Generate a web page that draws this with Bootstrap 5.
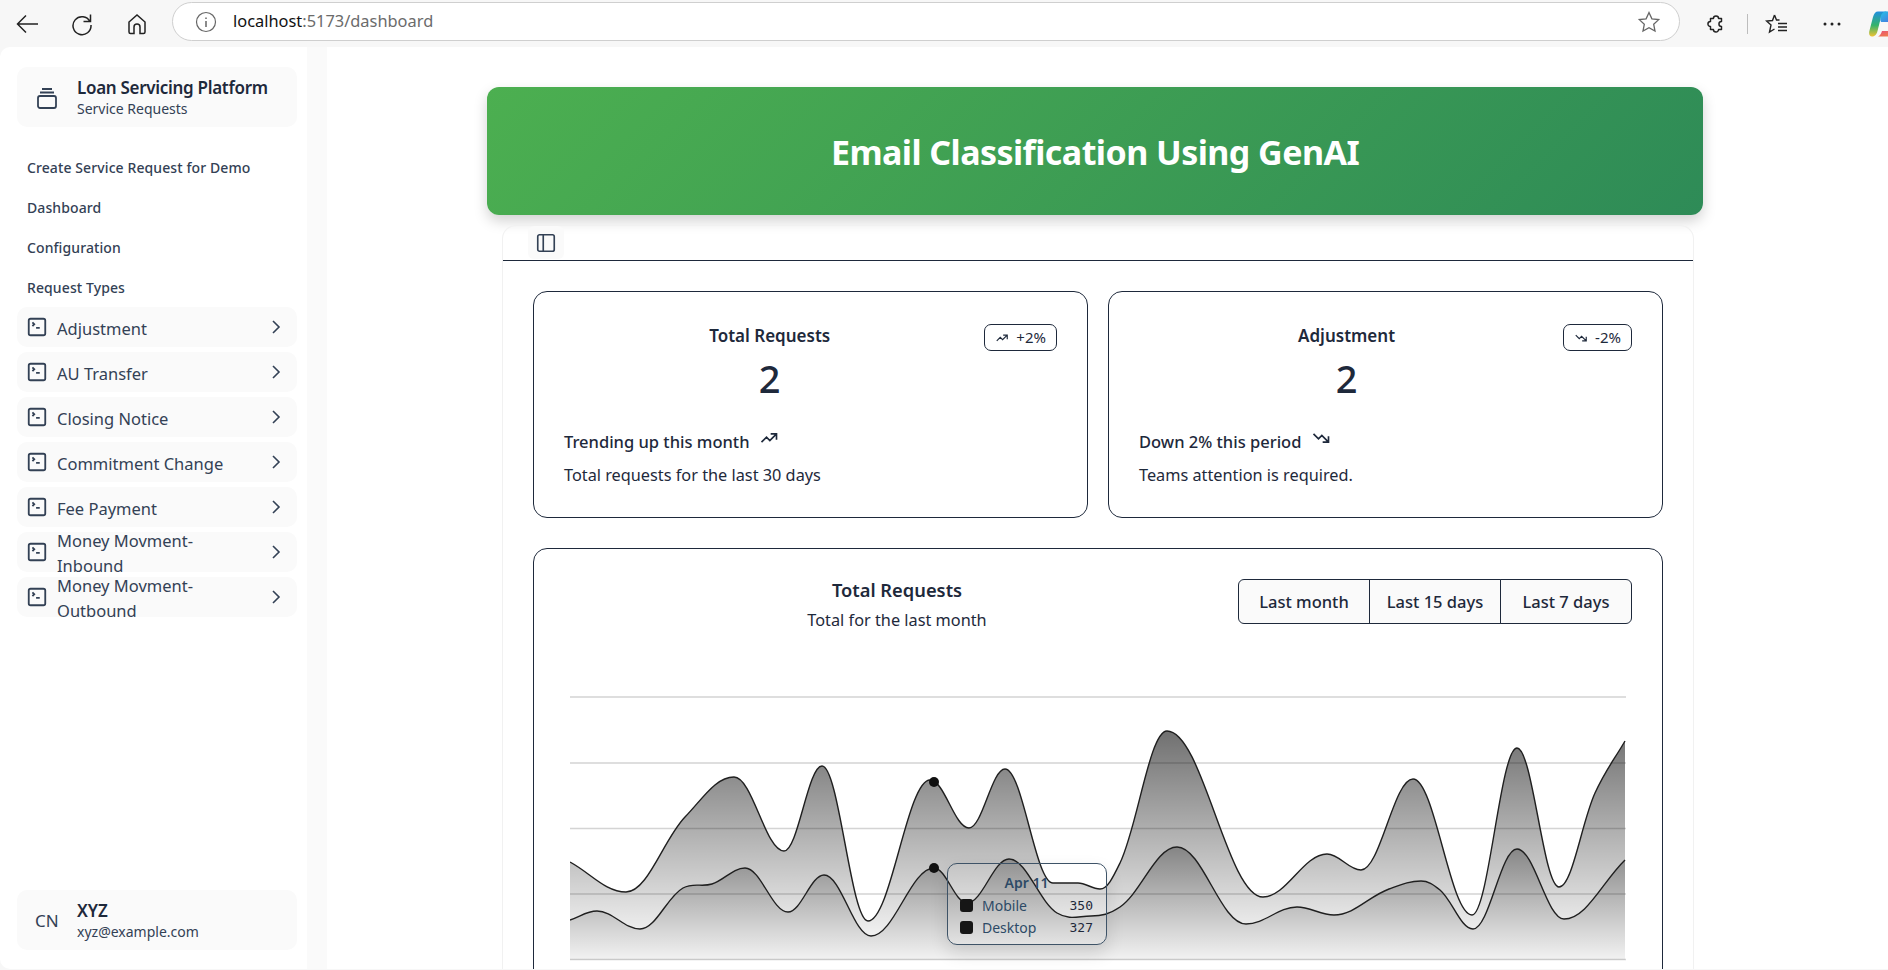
<!doctype html>
<html lang="en">
<head>
<meta charset="utf-8">
<title>Dashboard</title>
<link href="https://cdn.jsdelivr.net/npm/bootstrap@5.3.0/dist/css/bootstrap.min.css" rel="stylesheet">
<style>
html,body{height:970px;overflow:hidden;background:#f7f7f7}
body{font-family:"Noto Sans",sans-serif;color:#1e293b}
.br-bar{height:47px;padding-left:15px;gap:31px}
.br-bar svg{display:block}
.br-ic{width:24px;height:24px;flex:none}
.br-addr{height:39px;margin:-5px 0 0 -8px;flex:1;background:#fff;border:1px solid #cfcfcf;border-radius:20px;padding:1px 18px 0 22px;font-size:16.4px;color:#6b6b6b}
.br-addr b{font-weight:400;color:#111}
.br-right{width:208px;flex:none;margin-left:-31px;padding-left:25px;overflow:hidden;height:47px}
.br-div{width:1px;height:20px;background:#bdbdbd;margin:0 17px 0 20px}
.br-dots{margin:0 26px 0 32px}
.app{height:922px;background:#fff;border-radius:10px 0 0 10px;overflow:hidden}
.side{width:307px;flex:none;padding:20px 10px 19px 17px}
.gutter{width:20px;flex:none;background:#fafafa}
.tile{background:#fafafa;border-radius:10px}
.s-head{height:60px;padding:2px 0 0 18px;gap:18px}
.s-head .t1{font-size:17px;font-weight:600;line-height:22px;letter-spacing:-.3px}
.s-head .t2{font-size:14px;line-height:20px;color:#334155}
.s-link{height:40px;font-size:14px;font-weight:500;padding-left:10px;color:#334155;letter-spacing:.1px}
.s-link.first{margin-top:20px}
.s-item{height:40px;margin-bottom:5px;overflow:hidden;padding:0 9px;font-size:16.5px;line-height:25px;color:#334155}
.s-item .lbl{width:172px;margin-left:9px;flex:none;padding-top:2px}
.s-item .chev{margin-left:auto}
.s-item svg{flex:none}
.s-foot{height:60px;margin-top:auto;padding:2px 0 0 18px;gap:15px}
.s-foot .cn{width:27px;font-size:17px;color:#334155}
.s-foot .t1{font-size:17px;font-weight:600;line-height:22px}
.s-foot .t2{font-size:14px;line-height:20px;color:#334155}
.content{flex:1;padding-top:40px;padding-left:160px;min-width:0}
.hero{width:1216px;height:128px;padding-top:3px;border-radius:12px;background:linear-gradient(135deg,#4caf50,#2e8b57);box-shadow:0 6px 14px rgba(0,0,0,.18);color:#fff;font-size:34px;letter-spacing:-.55px;font-weight:700}
.panel{width:1192px;margin:10px 0 0 15px;border:1px solid #f1f1f1;border-radius:14px 14px 0 0;border-bottom:0}
.p-top{height:35px;border-bottom:1px solid #1e293b;padding-left:25px}
.p-toggle{width:36px;height:33px;background:#fafafa;border-radius:6px}
.p-body{padding:30px 30px 0 30px}
.kpi{width:555px;height:227px;border:1px solid #1e293b;border-radius:14px;background:#fff;padding:30px}
.kpi-head{padding-right:9px}
.kpi-title{font-size:17px;font-weight:600;line-height:24px;margin-top:2px}
.kpi-num{font-size:38px;font-weight:500;line-height:50px;margin-top:5px}
.kpi-badge{height:27px;border:1px solid #1e293b;border-radius:7px;padding:0 10px;font-size:15px;font-weight:400;gap:7px;color:#1e293b;flex:none;margin-top:2px}
.kpi-l1{font-size:16.5px;font-weight:500;line-height:24px;margin-top:25px;gap:10px}
.kpi-l1 svg{margin-bottom:7px}
.kpi-l2{font-size:16.3px;line-height:24px;margin-top:8px;color:#1e293b}
.chartcard{margin-top:30px;height:600px;border:1px solid #1e293b;border-radius:14px;padding:30px 30px 0 30px}
.ch-title{font-size:18.3px;font-weight:600;line-height:24px;margin-top:-1px}
.ch-sub{font-size:16.3px;line-height:24px;margin-top:6px}
.ch-head{height:75px}
.ch-text{padding-right:8px}
.rng .btn{width:132px;height:45px;padding:1px 0 0;background:#fafafa;border-color:#1e293b;color:#1e293b;font-size:16.5px;font-weight:500}
.plot{margin:36px 0 0 6px;width:1056px;height:290px}
.plot svg{display:block}
.tip{position:absolute;left:377px;top:173px;width:160px;height:82px;border:1px solid #3e5367;border-radius:10px;box-shadow:0 8px 18px rgba(0,0,0,.12);padding:7px 13px 7px 12px;font-size:14px;line-height:23px;color:#2d4a66}
.tip .d{font-weight:600;text-align:center}
.tip .rowline{height:22.500px}
.tip .sw{width:13px;height:13px;background:#161616;border-radius:3px;margin-right:9px}
.tip .v{margin-left:auto;font-family:"DejaVu Sans Mono",monospace;font-size:13px;color:#1e293b}
</style>
</head>
<body>
<div class="br-bar d-flex align-items-center">
  <svg class="br-ic" viewBox="0 0 24 24" fill="none" stroke="#222" stroke-width="1.5"><path d="M23 12H2.500M11 3.500 2.500 12l8.500 8.500"/></svg>
  <svg class="br-ic" viewBox="0 0 24 24" fill="none" stroke="#222" stroke-width="1.500"><path d="M20 9.500A9 9 0 1 0 21 13M20.500 2.500v7h-7"/></svg>
  <svg class="br-ic" viewBox="0 0 24 24" fill="none" stroke="#222" stroke-width="1.500"><path d="M4 20V10l8-7 8 7v10a1.500 1.500 0 0 1-1.500 1.500H15V15a3 3 0 0 0-6 0v6.500H5.500A1.500 1.500 0 0 1 4 20z"/></svg>
  <div class="br-addr d-flex align-items-center">
    <svg width="22" height="22" viewBox="0 0 22 22" fill="none" stroke="#666" stroke-width="1.200" class="me-3"><circle cx="11" cy="11" r="9.500"/><path d="M11 10v6M11 6.500v1.500" stroke-width="1.500"/></svg>
    <span><b>localhost</b>:5173/dashboard</span>
    <svg class="ms-auto" width="24" height="24" viewBox="0 0 24 24" fill="none" stroke="#666" stroke-width="1.300"><path d="M12 2.500l2.900 6.300 6.800.8-5 4.700 1.300 6.800-6-3.400-6 3.400 1.300-6.800-5-4.700 6.800-.8z"/></svg>
  </div>
  <div class="br-right d-flex align-items-center">
    <svg width="22" height="22" viewBox="0 0 24 24" fill="none" stroke="#222" stroke-width="1.600" stroke-linejoin="round" class="flex-shrink-0"><path d="M6 6h3.200a2.800 2.800 0 0 1 5.600 0H18v3.200a2.800 2.800 0 0 0 0 5.600V18h-3.200a2.800 2.800 0 0 1-5.600 0H6v-3.200a2.800 2.800 0 0 1 0-5.600z"/></svg>
    <div class="br-div flex-shrink-0"></div>
    <svg width="24" height="24" viewBox="0 0 24 24" fill="none" stroke="#222" stroke-width="1.400" class="flex-shrink-0"><path d="M9.500 3 7.500 8.500 1.500 9l4.500 4-1.500 7 5-3M9.500 3l2 5h3M13 11.500h9M13 15h9M13 18.500h9"/></svg>
    <svg width="22" height="6" viewBox="0 0 22 6" fill="#222" class="br-dots flex-shrink-0"><circle cx="4" cy="3" r="1.500"/><circle cx="11" cy="3" r="1.500"/><circle cx="18" cy="3" r="1.500"/></svg>
    <svg width="26" height="26" viewBox="0 0 26 26" class="flex-shrink-0">
      <defs>
        <linearGradient id="cp1" x1="0" y1="0" x2="0" y2="1"><stop offset="0" stop-color="#1f8fe0"/><stop offset=".55" stop-color="#35b36a"/><stop offset="1" stop-color="#f0c232"/></linearGradient>
        <linearGradient id="cp2" x1="0" y1="0" x2="1" y2="1"><stop offset="0" stop-color="#22c3e6"/><stop offset="1" stop-color="#4f6be0"/></linearGradient>
        <linearGradient id="cp3" x1="0" y1="0" x2="1" y2="1"><stop offset="0" stop-color="#e8507a"/><stop offset="1" stop-color="#f38a3c"/></linearGradient>
      </defs>
      <path d="M9 .5H19C14.500 1 12.500 4 11.500 8L8.500 20C7.500 24 5.500 25.500 3 25.500 .5 25.500-.5 23 .5 19.500L4 6C5 2.500 6.500.5 9 .5z" fill="url(#cp1)"/>
      <path d="M11 .5H26V11H13.500C12.500 11 11.500 11.500 11.300 8.500 11.500 4 13 1.500 16 .5z" fill="url(#cp2)"/>
      <path d="M9 25.500H26V20H13C12 23 11 24.500 9 25.500z" fill="url(#cp3)"/>
    </svg>
  </div>
</div>

<div class="app d-flex">
  <aside class="side d-flex flex-column">
    <div class="tile s-head d-flex align-items-center">
      <svg width="24" height="24" viewBox="0 0 24 24" fill="none" stroke="#334155" stroke-width="1.800"><path d="M7 3h10M5 6.500h14"/><rect x="3" y="10" width="18" height="12" rx="2"/></svg>
      <div><div class="t1">Loan Servicing Platform</div><div class="t2">Service Requests</div></div>
    </div>
    <div class="s-link first d-flex align-items-center">Create Service Request for Demo</div>
    <div class="s-link d-flex align-items-center">Dashboard</div>
    <div class="s-link d-flex align-items-center">Configuration</div>
    <div class="s-link d-flex align-items-center">Request Types</div>
    <div id="items"></div>
    <div class="tile s-foot d-flex align-items-center">
      <div class="cn">CN</div>
      <div><div class="t1">XYZ</div><div class="t2">xyz@example.com</div></div>
    </div>
  </aside>
  <div class="gutter"></div>
  <main class="content">
    <div class="hero d-flex align-items-center justify-content-center">Email Classification Using GenAI</div>
    <div class="panel">
      <div class="p-top"><div class="p-toggle d-flex align-items-center justify-content-center">
        <svg width="22" height="22" viewBox="0 0 24 24" fill="none" stroke="#334155" stroke-width="1.800"><rect x="3" y="3" width="18" height="18" rx="2"/><path d="M9 3v18"/></svg>
      </div></div>
      <div class="p-body">
        <div class="d-flex justify-content-between">
          <div class="card kpi">
            <div class="d-flex">
              <div class="flex-grow-1 text-center kpi-head"><div class="kpi-title">Total Requests</div><div class="kpi-num">2</div></div>
              <span class="badge kpi-badge d-inline-flex align-items-center">
                <svg width="14" height="14" viewBox="0 0 24 24" fill="none" stroke="#1e293b" stroke-width="2"><path d="M3 17l6-6 4 4 8-8M14 7h7v7"/></svg>+2%</span>
            </div>
            <div class="kpi-l1 d-flex align-items-center">Trending up this month <svg width="20" height="20" viewBox="0 0 24 24" fill="none" stroke="#1e293b" stroke-width="2"><path d="M3 17l6-6 4 4 8-8M14 7h7v7"/></svg></div>
            <div class="kpi-l2">Total requests for the last 30 days</div>
          </div>
          <div class="card kpi">
            <div class="d-flex">
              <div class="flex-grow-1 text-center kpi-head"><div class="kpi-title">Adjustment</div><div class="kpi-num">2</div></div>
              <span class="badge kpi-badge d-inline-flex align-items-center">
                <svg width="14" height="14" viewBox="0 0 24 24" fill="none" stroke="#1e293b" stroke-width="2"><path d="M3 7l6 6 4-4 8 8M21 10v7h-7"/></svg>-2%</span>
            </div>
            <div class="kpi-l1 d-flex align-items-center">Down 2% this period <svg width="20" height="20" viewBox="0 0 24 24" fill="none" stroke="#1e293b" stroke-width="2"><path d="M3 7l6 6 4-4 8 8M21 10v7h-7"/></svg></div>
            <div class="kpi-l2">Teams attention is required.</div>
          </div>
        </div>
        <div class="card chartcard">
          <div class="ch-head d-flex">
            <div class="flex-grow-1 text-center ch-text"><div class="ch-title">Total Requests</div><div class="ch-sub">Total for the last month</div></div>
            <div class="btn-group rng align-self-start" role="group">
              <button type="button" class="btn">Last month</button>
              <button type="button" class="btn">Last 15 days</button>
              <button type="button" class="btn">Last 7 days</button>
            </div>
          </div>
          <div class="plot position-relative">
            <svg id="chart" width="1056" height="290" viewBox="570 690 1056 290">
              <defs>
                <linearGradient id="gu" gradientUnits="userSpaceOnUse" x1="0" y1="731" x2="0" y2="945"><stop offset="0" stop-color="#000" stop-opacity=".56"/><stop offset="1" stop-color="#000" stop-opacity=".03"/></linearGradient>
                <linearGradient id="gl" gradientUnits="userSpaceOnUse" x1="0" y1="847" x2="0" y2="960"><stop offset="0" stop-color="#000" stop-opacity=".48"/><stop offset="1" stop-color="#000" stop-opacity=".05"/></linearGradient>
              </defs>
              <g stroke="#d4d4d4" stroke-width="1.500"><path d="M570 697H1626M570 763H1626M570 828.500H1626M570 894H1626M570 959.500H1626"/></g>
              <path id="au" fill="url(#gu)"/>
              <path id="al" fill="url(#gl)"/>
              <path id="lu" fill="none" stroke="#1f1f1f" stroke-width="1.400"/>
              <path id="ll" fill="none" stroke="#1f1f1f" stroke-width="1.400"/>
              <circle cx="934" cy="782" r="5" fill="#111"/>
              <circle cx="934" cy="868" r="5" fill="#111"/>
            </svg>
            <div class="tip">
              <div class="d">Apr 11</div>
              <div class="d-flex align-items-center rowline"><span class="sw"></span>Mobile<span class="v">350</span></div>
              <div class="d-flex align-items-center rowline"><span class="sw"></span>Desktop<span class="v">327</span></div>
            </div>
          </div>
        </div>
      </div>
    </div>
  </main>
</div>

<script>
(function(){
  var names=["Adjustment","AU Transfer","Closing Notice","Commitment Change","Fee Payment","Money Movment-Inbound","Money Movment-Outbound"];
  var html="";
  names.forEach(function(n){
    html+='<div class="tile s-item d-flex align-items-center"><svg width="22" height="22" viewBox="0 0 24 24" fill="none" stroke="#334155" stroke-width="2"><path d="m7 11 2-2-2-2M11 13h4"/><rect x="3" y="3" width="18" height="18" rx="2"/></svg><span class="lbl">'+n+'</span><svg class="chev" width="24" height="24" viewBox="0 0 24 24" fill="none" stroke="#334155" stroke-width="1.600"><path d="m9 18 6-6-6-6"/></svg></div>';
  });
  document.getElementById("items").innerHTML=html;

  var up=[[570,862],[626,892],[685,817],[734,777],[784,851],[822,766],[868,921],[930,780],[969,828],[1005,769],[1053,883],[1078,883],[1100,889],[1120,863],[1167,731],[1263,897],[1327,854],[1361,870],[1413,779],[1472,915],[1517,748],[1559,887],[1595,793],[1625,741]];
  var lo=[[570,920],[597,911],[640,929],[683,888],[712,884],[745,868],[788,912],[824,875],[871,936],[934,868],[967,903],[1009,859],[1057,913],[1091,916],[1120,907],[1177,847],[1246,924],[1297,907],[1334,915],[1389,889],[1421,881],[1440,890],[1473,929],[1517,849],[1564,919],[1625,860]];
  function tang(p){
    var n=p.length,d=[],m=[];
    for(var i=0;i<n-1;i++)d[i]=(p[i+1][1]-p[i][1])/(p[i+1][0]-p[i][0]);
    m[0]=d[0];m[n-1]=d[n-2];
    for(i=1;i<n-1;i++)m[i]=d[i-1]*d[i]<=0?0:(d[i-1]+d[i])/2;
    return m;
  }
  function fwd(p){
    var m=tang(p),s="";
    for(var i=0;i<p.length-1;i++){
      var h=(p[i+1][0]-p[i][0])/2.7;
      s+="C"+(p[i][0]+h)+" "+(p[i][1]+m[i]*h)+" "+(p[i+1][0]-h)+" "+(p[i+1][1]-m[i+1]*h)+" "+p[i+1][0]+" "+p[i+1][1];
    }
    return s;
  }
  function rev(p){
    var m=tang(p),s="";
    for(var i=p.length-1;i>0;i--){
      var h=(p[i][0]-p[i-1][0])/2.7;
      s+="C"+(p[i][0]-h)+" "+(p[i][1]-m[i]*h)+" "+(p[i-1][0]+h)+" "+(p[i-1][1]+m[i-1]*h)+" "+p[i-1][0]+" "+p[i-1][1];
    }
    return s;
  }
  var U="M570 862"+fwd(up),L="M570 920"+fwd(lo);
  document.getElementById("lu").setAttribute("d",U);
  document.getElementById("ll").setAttribute("d",L);
  document.getElementById("au").setAttribute("d",U+"L1625 860"+rev(lo)+"Z");
  document.getElementById("al").setAttribute("d",L+"L1625 960L570 960Z");
})();
</script>
<script src="https://cdn.jsdelivr.net/npm/bootstrap@5.3.0/dist/js/bootstrap.bundle.min.js"></script>
</body>
</html>
